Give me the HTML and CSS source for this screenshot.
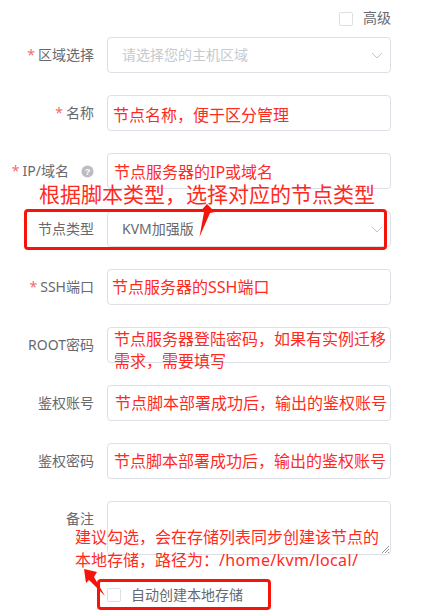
FILE: index.html
```html
<!DOCTYPE html>
<html lang="zh">
<head>
<meta charset="utf-8">
<title>节点</title>
<link rel="stylesheet" href="styles.css">
</head>
<body>
<main class="page">
  <div class="top"><span class="check"></span><span class="check-label">高级</span></div>
  <div class="row"><label class="label"><i>*</i>区域选择</label><div class="control select placeholder">请选择您的主机区域<svg class="chev" viewBox="0 0 12 7"><path d="M1 1l5 5 5-5"/></svg></div></div>
  <div class="row"><label class="label"><i>*</i>名称</label><div class="control"></div></div>
  <div class="row"><label class="label"><i>*</i>IP/域名<svg class="help" viewBox="0 0 14 14"><circle cx="7" cy="7" r="6.5"/><text x="7" y="10.5" text-anchor="middle">?</text></svg></label><div class="control"></div></div>
  <div class="row"><label class="label">节点类型</label><div class="control select">KVM加强版<svg class="chev" viewBox="0 0 12 7"><path d="M1 1l5 5 5-5"/></svg></div></div>
  <div class="row"><label class="label"><i>*</i>SSH端口</label><div class="control"></div></div>
  <div class="row"><label class="label">ROOT密码</label><div class="control"></div></div>
  <div class="row"><label class="label">鉴权账号</label><div class="control"></div></div>
  <div class="row"><label class="label">鉴权密码</label><div class="control"></div></div>
  <div class="row"><label class="label">备注</label><div class="control textarea"><svg class="grip" viewBox="0 0 9 9"><path d="M1 8l7-7M4 8l4-4M7 8l1-1"/></svg></div></div>
  <div class="auto"><span class="check"></span><span class="check-label">自动创建本地存储</span></div>

  <p class="note n1">节点名称，便于区分管理</p>
  <p class="note n2">节点服务器的IP或域名</p>
  <p class="note big">根据脚本类型，选择对应的节点类型</p>
  <div class="box box1"></div>
  <svg class="arrow a1" viewBox="0 0 50 45"><path d="M27 9l8 8-5 1-10.500 24L24 17l-2.500-2z"/></svg>
  <p class="note n3">节点服务器的SSH端口</p>
  <p class="note n4">节点服务器登陆密码，如果有实例迁移<br>需求，需要填写</p>
  <p class="note n5">节点脚本部署成功后，输出的鉴权账号</p>
  <p class="note n6">节点脚本部署成功后，输出的鉴权账号</p>
  <p class="note n7">建议勾选，会在存储列表同步创建该节点的<br>本地存储，路径为：<span class="path">/home/kvm/local/</span></p>
  <div class="box box2"></div>
  <svg class="arrow a2" viewBox="0 0 60 56"><path d="M9 9l13 3-3 5 11 19-16-16-3 3z"/></svg>
</main>
</body>
</html>
```
FILE: styles.css
```css
* { box-sizing: border-box; }
html, body { margin: 0; background: #fff; }
.page {
  position: relative;
  width: 421px;
  height: 616px;
  overflow: hidden;
  font: 14px/20px "Noto Sans", "Noto Sans CJK SC", sans-serif;
  color: #67696e;
}
.top {
  display: flex;
  justify-content: flex-end;
  align-items: center;
  height: 37px;
  padding: 0 30px 0 0;
  gap: 10px;
}
.check {
  width: 14px;
  height: 14px;
  flex: none;
  border: 1px solid #dcdfe6;
  border-radius: 2px;
  background: #fff;
}
.check-label { margin-bottom: 1px; }
.row {
  display: flex;
  gap: 13px;
  margin-bottom: 22px;
}
.label {
  width: 94px;
  height: 36px;
  padding-bottom: 1px;
  flex: none;
  display: flex;
  justify-content: flex-end;
  align-items: center;
  white-space: nowrap;
}
.label i {
  font-style: normal;
  color: #f56c6c;
  margin-right: 3px;
}
.help { width: 13px; height: 13px; margin: 1px 0 0 12px; flex: none; }
.help circle { fill: #bcbdc0; }
.help text { font-size: 10px; font-weight: 700; fill: #fff; font-family: "Liberation Sans", sans-serif; }
.control {
  position: relative;
  width: 284px;
  height: 36px;
  flex: none;
  border: 1px solid #dcdfe6;
  border-radius: 4px;
  background: #fff;
}
.select {
  display: flex;
  align-items: center;
  padding: 0 0 1px 14px;
}
.placeholder { color: #c6c9d0; }
.chev {
  position: absolute;
  right: 7px;
  top: 14px;
  width: 12px;
  height: 7px;
  fill: none;
  stroke: #c0c4cc;
  stroke-width: 1;
}
.textarea { height: 54px; }
.grip {
  position: absolute;
  right: 0;
  bottom: 0;
  width: 9px;
  height: 9px;
  fill: none;
  stroke: #777;
  stroke-width: .8;
}
.auto {
  display: flex;
  align-items: center;
  gap: 10px;
  margin: 32px 0 0 107px;
  height: 16px;
}
.note {
  position: absolute;
  margin: 0;
  font-size: 16px;
  line-height: 22px;
  color: #ff2a1f;
  white-space: nowrap;
}
.n1 { left: 113px; top: 104px; }
.n2 { left: 114px; top: 161px; }
.big { left: 39px; top: 179px; font-size: 21px; line-height: 30px; }
.n3 { left: 112px; top: 276px; }
.n4 { left: 114px; top: 328px; }
.n5 { left: 115px; top: 392px; }
.n6 { left: 114px; top: 450px; }
.n7 { left: 75px; top: 526px; line-height: 23px; }
.path { letter-spacing: .35px; }
.box {
  position: absolute;
  border: 3px solid #f5140a;
  border-radius: 4px;
}
.box1 { left: 24px; top: 209px; width: 363px; height: 41px; }
.box2 { left: 97px; top: 579px; width: 174px; height: 31px; }
.arrow { position: absolute; fill: #f5140a; }
.a1 { left: 180px; top: 195px; width: 50px; height: 45px; }
.a2 { left: 75px; top: 560px; width: 60px; height: 56px; }
```
